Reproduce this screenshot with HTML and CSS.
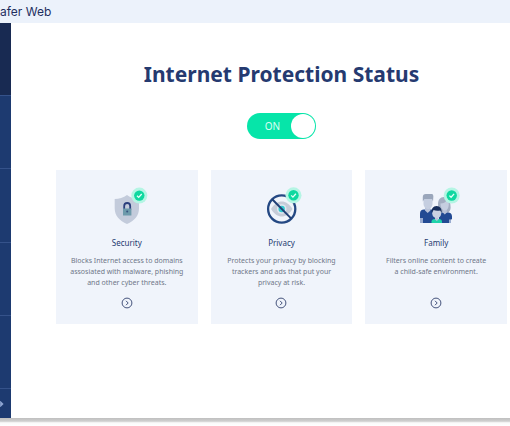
FILE: index.html
```
<!DOCTYPE html>
<html lang="en">
<head>
  <meta charset="UTF-8">
  <title>Internet Protection Status</title>
  <link rel="stylesheet" href="styles.css">
</head>
<body>
  <header class="topbar">afer Web</header>

  <div class="layout">
    <nav class="sidebar" aria-label="Main menu">
      <a href="#status" class="active" aria-label="Status"></a>
      <a href="#security" aria-label="Security"></a>
      <a href="#privacy" aria-label="Privacy"></a>
      <a href="#family" aria-label="Family"></a>
      <a href="#settings" aria-label="Settings"></a>
      <button class="expand" aria-label="Expand menu">
        <svg width="4" height="8" viewBox="0 0 4 8"><path d="M0 1.5L2.6 4L0 6.5M0 4h2.4" fill="none" stroke="#8fa6d3" stroke-width="1.4"/></svg>
      </button>
    </nav>

    <main class="content">
      <h1>Internet Protection Status</h1>

      <label class="toggle">
        <input type="checkbox" checked>
        <span class="toggle-text">ON</span>
        <span class="knob"></span>
      </label>

      <div class="cards">
        <section class="card">
          <svg class="icon" viewBox="0 0 50 50">
            <path d="M25 13C21.5 15.8 17 17 12.7 17v9.5C12.7 33.5 17.5 39 25 42c7.5-3 12-8.5 12-15.5V17C32.5 17 28.5 15.8 25 13z" fill="#c3cbdb"/>
            <path d="M22.2 28v-4a3 3 0 0 1 6 0v4" fill="none" stroke="#2a3e7c" stroke-width="1.8"/>
            <rect x="21" y="26.5" width="8.4" height="7" fill="#6d9aab"/>
            <circle cx="25.2" cy="29.5" r="1" fill="#36527f"/>
            <circle cx="37.3" cy="13.6" r="8" fill="#b5f5e4"/>
            <circle cx="37.3" cy="13.6" r="5.2" fill="#0fd8a0"/>
            <path d="M35 13.7l1.7 1.7 3-3.4" fill="none" stroke="#e9fff8" stroke-width="1.3"/>
          </svg>
          <h2>Security</h2>
          <p>Blocks Internet access to domains assosiated with malware, phishing and other cyber threats.</p>
          <button class="more" aria-label="Open Security">
            <svg viewBox="0 0 12 12"><circle cx="6" cy="6" r="4.9"/><path d="M5 3.8L7.2 6L5 8.2"/></svg>
          </button>
        </section>

        <section class="card">
          <svg class="icon" viewBox="0 0 50 50">
            <path d="M15 27c3-5 7-7.5 10.800-7.5S33.500 22 36.500 27c-3 5-6.900 7.500-10.700 7.500S18 32 15 27z" fill="#c6ccd8"/>
            <circle cx="25.700" cy="27" r="4.800" fill="#dfe8f2"/>
            <circle cx="25.700" cy="27" r="3.200" fill="#35c9cf"/>
            <circle cx="25.700" cy="27" r="13.600" fill="none" stroke="#244883" stroke-width="2.300"/>
            <path d="M16.200 17.300L35.300 36.600" stroke="#203f76" stroke-width="2"/>
            <circle cx="37.500" cy="13.300" r="8" fill="#b5f5e4"/>
            <circle cx="37.500" cy="13.300" r="5.200" fill="#0fd8a0"/>
            <path d="M35.200 13.400l1.700 1.700 3-3.400" fill="none" stroke="#e9fff8" stroke-width="1.300"/>
          </svg>
          <h2>Privacy</h2>
          <p>Protects your privacy by blocking trackers and ads that put your privacy at risk.</p>
          <button class="more" aria-label="Open Privacy">
            <svg viewBox="0 0 12 12"><circle cx="6" cy="6" r="4.9"/><path d="M5 3.8L7.2 6L5 8.2"/></svg>
          </button>
        </section>

        <section class="card">
          <svg class="icon" viewBox="0 0 50 50">
            <!-- father -->
            <path d="M9 41V31.5c0-2.5 1.5-4 4-4h7c2.5 0 4 1.5 4 4V41z" fill="#224a93"/>
            <path d="M14 24h5.400v4.500l-2.700 2.500-2.700-2.500z" fill="#b8c2d8"/>
            <path d="M12.500 16h9v5.500c0 3-2 5.500-4.500 5.500s-4.500-2.500-4.500-5.500z" fill="#c5cee0"/>
            <path d="M11.800 19.500V15c0-2 1-3 3-3h6.500c1 1 1.200 2 1 3.500l-.3 4-1-2.500h-7.600z" fill="#9aa6bb"/>
            <path d="M9 36h3v5H9z" fill="#9aacd0"/>
            <!-- mother -->
            <path d="M33 15c-4 0-6 3-6 7 0 3 1 6 2.500 8.500h8c1.800-2 2.500-4 2-6.500 0-5-2-9-6.500-9z" fill="#a3aec2"/>
            <path d="M28 41v-6c0-3 1-4.500 3.500-4.500H37c2.500 0 4 1.500 4 4V37l-1.500 1v3z" fill="#224a93"/>
            <path d="M31.800 27h4v3.500l-2 2-2-2z" fill="#b8c2d8"/>
            <path d="M29.500 21.500c3 0 5-1 6-3 1.200 1 2.300 2 2.300 3.500 0 3.700-1.500 6.500-4 6.500s-4.300-3-4.300-7z" fill="#c5cee0"/>
            <path d="M38 37.500h2V41h-2z" fill="#9aacd0"/>
            <!-- child -->
            <path d="M20.500 41v-1.500c0-1.500 1.500-2.500 3-2.500h4.500c1.700 0 3 1 3 2.500V41z" fill="#1fd3aa"/>
            <path d="M24 34h3.500v3.500l-1.700 1.500-1.800-1.500z" fill="#b8c2d8"/>
            <circle cx="25.700" cy="31.500" r="4.500" fill="#c9d1e2"/>
            <path d="M20.600 31c-.5-4 1.500-7 5-7s5.500 3 5 7l-1.300-2.500c-3 .5-5 .3-6.800-.5z" fill="#172e5c"/>
            <circle cx="40.700" cy="13.500" r="8" fill="#b5f5e4"/>
            <circle cx="40.700" cy="13.500" r="5.200" fill="#0fd8a0"/>
            <path d="M38.400 13.600l1.700 1.700 3-3.400" fill="none" stroke="#e9fff8" stroke-width="1.300"/>
          </svg>
          <h2>Family</h2>
          <p>Filters online content to create a&nbsp;child-safe environment.</p>
          <button class="more" aria-label="Open Family">
            <svg viewBox="0 0 12 12"><circle cx="6" cy="6" r="4.9"/><path d="M5 3.8L7.2 6L5 8.2"/></svg>
          </button>
        </section>
      </div>
    </main>
  </div>

  <footer class="window-edge"></footer>
</body>
</html>
```

FILE: styles.css
```
* { box-sizing: border-box; }
body {
  margin: 0;
  min-height: 100vh;
  display: flex;
  flex-direction: column;
  font-family: 'Noto Sans', 'Open Sans', sans-serif;
  color: #253a70;
  background: #fff;
}
.topbar {
  height: 23px;
  line-height: 24px;
  background: #ecf2fb;
  color: #1f2f5f;
  font-family: Inter, sans-serif;
  font-size: 12px;
}
.layout {
  flex: 1;
  display: flex;
}
.sidebar {
  width: 11px;
  display: flex;
  flex-direction: column;
  background: #1d3a70;
}
.sidebar a {
  flex: 1;
  border-bottom: 1px solid #35528a;
}
.sidebar a.active {
  background: #182a52;
}
.expand {
  height: 29px;
  padding: 0;
  border: 0;
  background: none;
  display: flex;
  align-items: center;
  cursor: pointer;
}
.content {
  flex: 1;
  padding: 35px 3px 20px 45px;
  display: flex;
  flex-direction: column;
  align-items: center;
}
h1 {
  margin: 0;
  font-size: 21px;
  line-height: 32px;
}
.toggle {
  margin-top: 23px;
  width: 69px;
  height: 26px;
  padding: 1px;
  border-radius: 13px;
  background: #06e5a9;
  display: flex;
  align-items: center;
  cursor: pointer;
}
.toggle input {
  appearance: none;
  margin: 0;
}
.toggle-text {
  flex: 1;
  padding-left: 6px;
  text-align: center;
  font-size: 10px;
  color: #d8fff3;
}
.knob {
  width: 24px;
  height: 24px;
  border-radius: 50%;
  background: #fff;
}
.cards {
  width: 100%;
  margin-top: 31px;
  display: grid;
  grid-template-columns: repeat(3, 1fr);
  gap: 13px;
}
.card {
  padding: 12px 12px 15px;
  background: #f0f4fb;
  display: flex;
  flex-direction: column;
  align-items: center;
  text-align: center;
}
.icon {
  width: 50px;
  height: 50px;
}
h2 {
  margin: 5px 0 6px;
  font-size: 8px;
  line-height: 12px;
  font-weight: 400;
}
p {
  margin: 0 0 9px;
  font-size: 7px;
  line-height: 11px;
  color: #6f7788;
}
.more {
  width: 12px;
  height: 12px;
  margin-top: auto;
  padding: 0;
  border: 0;
  background: none;
  cursor: pointer;
}
.more svg {
  display: block;
  fill: none;
  stroke: #44527b;
  stroke-width: 1;
}
.window-edge {
  height: 8px;
  background: linear-gradient(#bfbfbf, #cfcfcf 40%, #fafafa 60%, #fff);
}
```
